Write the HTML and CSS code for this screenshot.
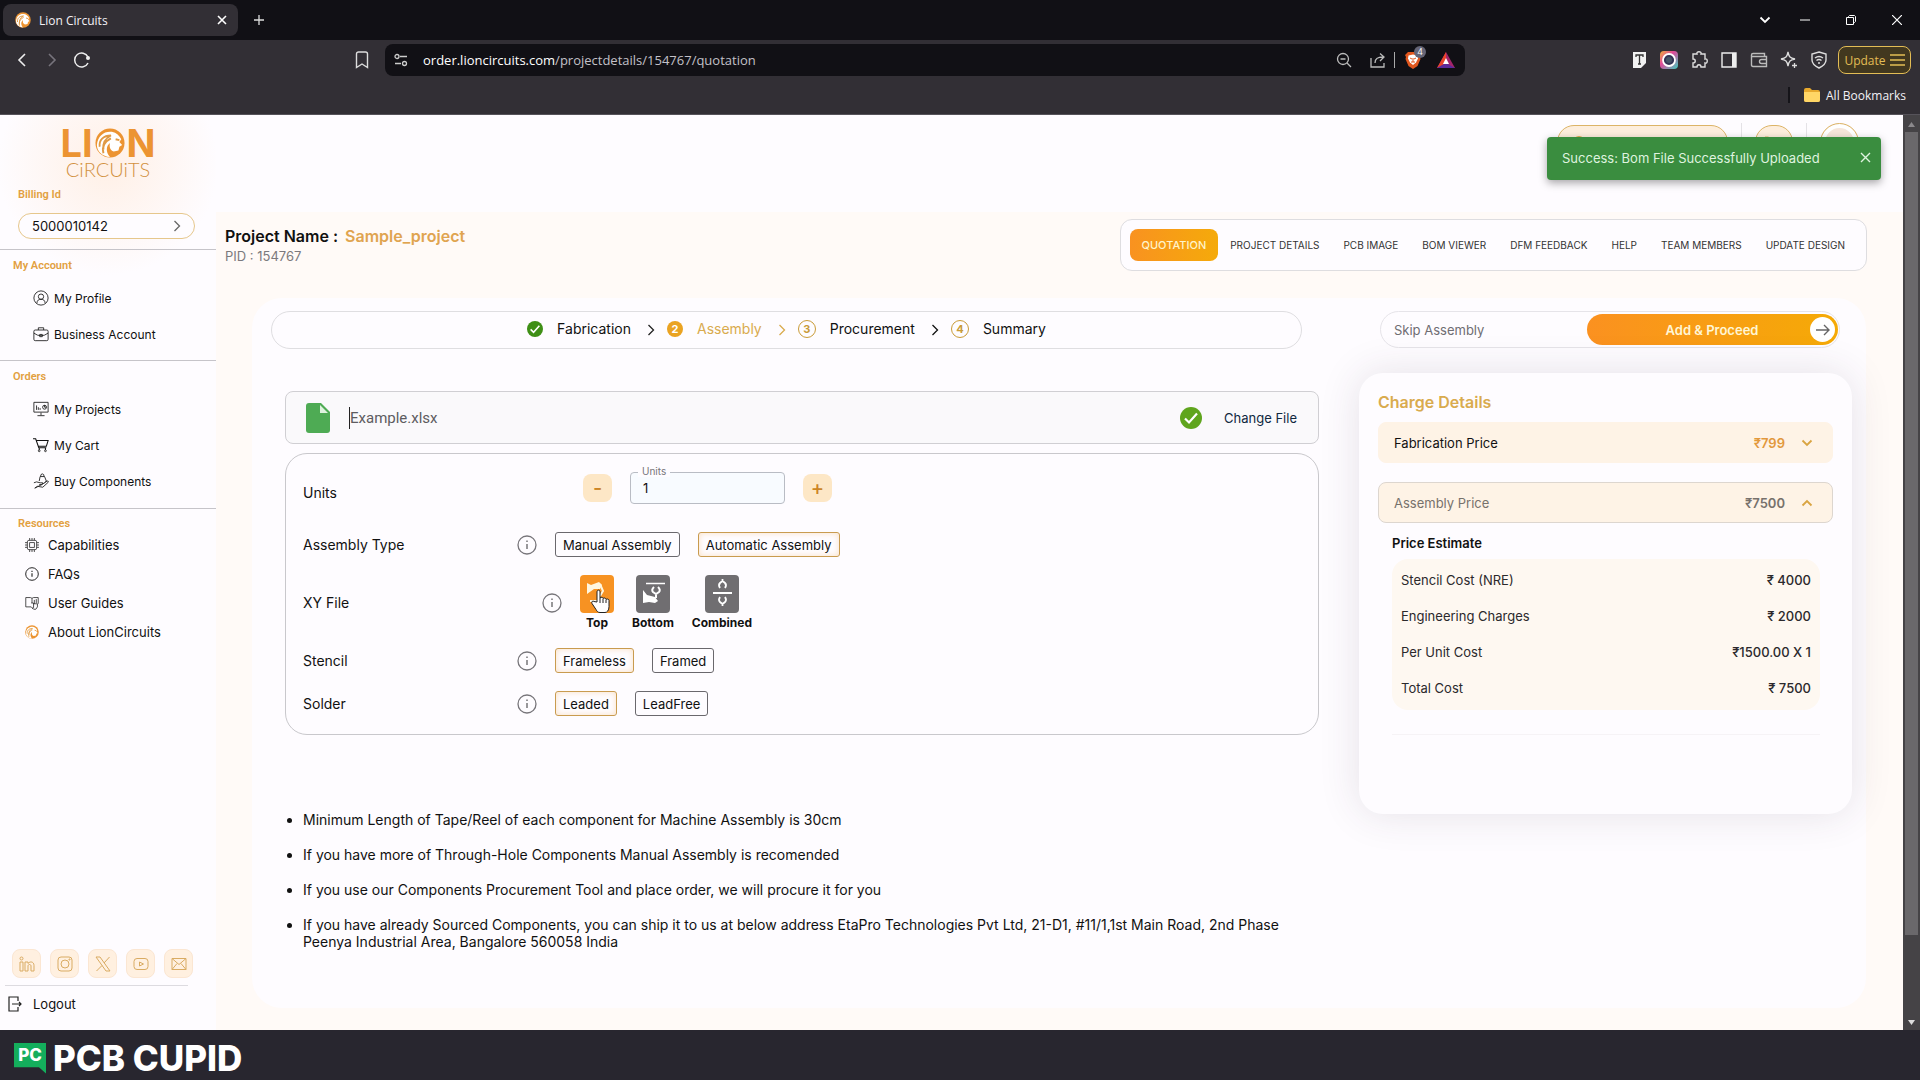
FILE: index.html
```html
<!DOCTYPE html>
<html lang="en">
<head>
    <meta charset="UTF-8">
    <meta name="viewport" content="width=device-width, initial-scale=1.0">
    <title>Lion Circuits</title>
    <link rel="stylesheet" href="styles.css">
</head>
<body>
    <!-- shared symbols -->
    <svg class="defs" aria-hidden="true">
        <symbol id="lion" viewBox="0 0 32 32">
            <circle cx="16" cy="16" r="15.500" fill="#ec9432"/>
            <path d="M2 18C3 8 10 3 18 4c5 1 8 4 10 8l-2 3 3 3-3 2-1 4-5 1c-4-1-5-5-4-9-4 3-5 9 0 15C8 30 2 25 2 18z" fill="#fff"/>
            <path d="M5 20c-1-7 4-12 12-12-6 3-9 8-8 15M9 27c-2-8 2-13 8-16M22 12l4 1" fill="none" stroke="#e09a45" stroke-width="2"/>
        </symbol>
        <symbol id="info" viewBox="0 0 20 20">
            <circle cx="10" cy="10" r="9" fill="none" stroke="currentColor" stroke-width="1.300"/>
            <path d="M10 9v5M10 5.500v1.500" stroke="currentColor" stroke-width="1.500"/>
        </symbol>
        <symbol id="chevron" viewBox="0 0 8 12">
            <path d="M1.500 1l5 5-5 5" fill="none" stroke="currentColor" stroke-width="1.300"/>
        </symbol>
        <symbol id="down" viewBox="0 0 12 8">
            <path d="M1.500 1.500l4.500 4.500 4.500-4.500" fill="none" stroke="currentColor" stroke-width="1.800"/>
        </symbol>
        <symbol id="check" viewBox="0 0 22 22">
            <circle cx="11" cy="11" r="11" fill="currentColor"/>
            <path d="M5 11.500l4 4 8-9" fill="none" stroke="#fff" stroke-width="2.200"/>
        </symbol>
        <symbol id="cart" viewBox="0 0 18 18">
            <path d="M0 2h3l3.500 10h8.500M3.500 4h13.500l-2 6.500H6M7 12.500v2M14 12.500v2" fill="none" stroke="currentColor" stroke-width="1.200"/>
            <circle cx="7" cy="15.500" r="1"/><circle cx="14" cy="15.500" r="1"/>
        </symbol>
    </svg>

    <header class="browser">
        <div class="titlebar">
            <div class="tab">
                <svg class="tab-icon" viewBox="0 0 32 32"><use href="#lion"/></svg>
                <span>Lion Circuits</span>
                <button class="plain tab-close" aria-label="Close tab"><svg width="10" height="10" viewBox="0 0 10 10"><path d="M1 1l8 8M9 1l-8 8" stroke="#fff" stroke-width="1.600"/></svg></button>
            </div>
            <button class="plain" aria-label="New tab"><svg width="12" height="12" viewBox="0 0 12 12"><path d="M6 1v10M1 6h10" stroke="#ddd" stroke-width="1.300"/></svg></button>
            <div class="window-buttons">
                <button class="plain tab-search" aria-label="Search tabs"><svg width="12" height="8" viewBox="0 0 12 8" color="#fff"><use href="#down"/></svg></button>
                <button class="plain" aria-label="Minimize"><svg width="10" height="10" viewBox="0 0 10 10"><path d="M0 5h10" stroke="#fff"/></svg></button>
                <button class="plain" aria-label="Restore"><svg width="10" height="10" viewBox="0 0 10 10"><path d="M.5 2.500h7v7h-7zM2.500 2.500v-1l1-1h5l1 1v5l-1 1H8" fill="none" stroke="#fff"/></svg></button>
                <button class="plain" aria-label="Close"><svg width="10" height="10" viewBox="0 0 10 10"><path d="M0 0l10 10M10 0L0 10" stroke="#fff" stroke-width="1.200"/></svg></button>
            </div>
        </div>

        <div class="toolbar">
            <button class="plain" aria-label="Back"><svg width="18" height="18" viewBox="0 0 18 18"><path d="M12 3L6 9l6 6" fill="none" stroke="#eee" stroke-width="1.600"/></svg></button>
            <button class="plain" aria-label="Forward"><svg width="18" height="18" viewBox="0 0 18 18"><path d="M6 3l6 6-6 6" fill="none" stroke="#77747c" stroke-width="1.600"/></svg></button>
            <button class="plain" aria-label="Reload"><svg width="18" height="18" viewBox="0 0 18 18"><path d="M15 12a7 7 0 1 1 0-6" fill="none" stroke="#eee" stroke-width="1.500"/><circle cx="15" cy="7" r="2" fill="#eee"/></svg></button>
            <button class="plain bookmark" aria-label="Bookmark"><svg width="14" height="18" viewBox="0 0 14 18"><path d="M1.500 3a2 2 0 0 1 2-2h7a2 2 0 0 1 2 2v13.500L7 13l-5.500 3.500z" fill="none" stroke="#ddd" stroke-width="1.400"/></svg></button>
            <div class="address">
                <svg width="14" height="14" viewBox="0 0 14 14" fill="none" stroke="#ccc" stroke-width="1.300"><circle cx="3" cy="3.500" r="2"/><path d="M6 3.500h7M1 10.500h6"/><circle cx="10.500" cy="10.500" r="2"/></svg>
                <span class="address-text"><b>order.lioncircuits.com</b>/projectdetails/154767/quotation</span>
                <svg class="zoom-out" width="16" height="16" viewBox="0 0 16 16" fill="none" stroke="#bbb" stroke-width="1.300"><circle cx="7" cy="7" r="5.500"/><path d="M4.500 7h5M11 11l4 4"/></svg>
                <svg width="16" height="16" viewBox="0 0 16 16" fill="none" stroke="#bbb" stroke-width="1.300"><path d="M1 6v9h13v-4M5 11c0-5 3-6 8-6M10 1.500L14 5l-4 4"/></svg>
                <i class="bar"></i>
                <span class="shield">
                    <svg width="16" height="18" viewBox="0 0 16 18"><path d="M3 1h10l3 3-1 2 .5 2-3 7L8 18l-4.500-3-3-7L1 6 0 4z" fill="#e2571e"/><path d="M3.500 4.500L8 3.500l4.500 1 .500 3-2 4-3 2.500-3-2.500-2-4z" fill="#fff"/><path d="M5 7l2 1M11 7l-2 1M8 7v4M6 11h4" stroke="#e2571e"/></svg>
                    <em>4</em>
                </span>
                <svg width="18" height="16" viewBox="0 0 18 16"><path d="M9 0l9 16H0z" fill="#a3246a"/><path d="M9 0L0 16l9-5z" fill="#e8442a"/><path d="M0 16h18l-9-5z" fill="#5b2b9a"/><path d="M9 6l3 6H6z" fill="#fff"/></svg>
            </div>
            <svg width="18" height="18" viewBox="0 0 18 18"><path d="M3 1h13v11l-5 5H3z" fill="#f2f2f2"/><path d="M6 6V4h7v2M9.500 4v9M8 13h3" fill="none" stroke="#333" stroke-width="1.300"/></svg>
            <svg width="18" height="18" viewBox="0 0 18 18"><defs><linearGradient id="lens" x2="1" y2="1"><stop stop-color="#f0b13a"/><stop offset=".4" stop-color="#e0489a"/><stop offset="1" stop-color="#3ccfc0"/></linearGradient></defs><rect width="18" height="18" rx="4" fill="url(#lens)"/><circle cx="9" cy="9" r="6" fill="#335" stroke="#fff" stroke-width="1.800"/><circle cx="9" cy="9" r="3" fill="#456"/></svg>
            <svg width="18" height="18" viewBox="0 0 18 18"><path d="M3 3h4c-1-3 5-3 4 0h4v5c3-1 3 5 0 4v4h-4c0-3-4-3-4 0H3v-4c3 0 3-4 0-4z" fill="none" stroke="#ddd" stroke-width="1.400"/></svg>
            <svg width="18" height="18" viewBox="0 0 18 18"><path d="M2 2h14v14H2z" fill="none" stroke="#eee" stroke-width="1.400"/><path d="M12 2h4v14h-4z" fill="#eee"/></svg>
            <svg width="18" height="18" viewBox="0 0 18 18"><path d="M3 2.500h11.500v3h2v10H3q-1.500 0-1.500-1.500V4q0-1.500 1.500-1.500zM1.500 5.500h13M16.500 8.500h-5q-2 0-2 2t2 2h5" fill="none" stroke="#bbb" stroke-width="1.400"/></svg>
            <svg width="18" height="18" viewBox="0 0 18 18"><path d="M8 1c1 5 2 6 7 7-5 1-6 2-7 7-1-5-2-6-7-7 5-1 6-2 7-7zM14.500 12v5M12 14.500h5" fill="none" stroke="#ddd" stroke-width="1.300"/></svg>
            <svg width="18" height="18" viewBox="0 0 18 18"><path d="M9 1l7 2v6c0 4-3 6-7 8-4-2-7-4-7-8V3zM5 7q4-3 8 0M6.500 9.500q2.500-2 5 0" fill="none" stroke="#ddd" stroke-width="1.400"/><circle cx="9" cy="12" r="1" fill="#ddd"/></svg>
            <button class="update">Update
                <svg width="15" height="12" viewBox="0 0 15 12"><path d="M0 1h15M0 6h15M0 11h15" stroke="#e3bd55" stroke-width="1.300"/></svg>
            </button>
        </div>

        <div class="bookmarks">
            <i class="bar"></i>
            <svg width="16" height="14" viewBox="0 0 16 14"><path d="M0 2q0-2 2-2h4l2 2h6q2 0 2 2v8q0 2-2 2H2q-2 0-2-2z" fill="#e7a92d"/><path d="M0 4h16v8q0 2-2 2H2q-2 0-2-2z" fill="#ffd666"/></svg>
            <span>All Bookmarks</span>
        </div>
    </header>

    <div class="page">
        <aside class="sidebar">
            <div class="logo">
                <div class="logo-top">LI<svg width="30" height="30" viewBox="0 0 32 32"><use href="#lion"/></svg>N</div>
                <div class="logo-bottom">CiRCUiTS</div>
            </div>
            <div class="side-title billing-title">Billing Id</div>
            <button class="billing">5000010142
                <svg width="8" height="12" viewBox="0 0 8 12"><use href="#chevron"/></svg>
            </button>

            <nav class="side-section">
                <div class="side-title">My Account</div>
                <a href="#"><svg viewBox="0 0 18 18"><circle cx="9" cy="9" r="8"/><circle cx="9" cy="7.500" r="3"/><path d="M4.500 14.500c0-3 2-4 4.500-4s4.500 1 4.500 4"/></svg>My Profile</a>
                <a href="#"><svg viewBox="0 0 18 18"><path d="M2.500 4.500h13q1.500 0 1.500 1.500v9q0 1.500-1.500 1.500h-13Q1 16.500 1 15V6q0-1.500 1.500-1.500zM6 4.500V2h6v2.500M1 8q4 3 8 3t8-3M7.500 9.500h3v2.500h-3z"/></svg>Business Account</a>
            </nav>
            <nav class="side-section orders">
                <div class="side-title">Orders</div>
                <a href="#"><svg viewBox="0 0 18 18"><path d="M1 1.500h16v11H1zM9 13v3M5 16.500h8M4 5v5M6 7v3M8 8v2"/><circle cx="13" cy="7" r="2.200"/><path d="M13 7V4.500M13 7h2"/></svg>My Projects</a>
                <a href="#"><svg viewBox="0 0 18 18"><use href="#cart"/></svg>My Cart</a>
                <a href="#"><svg viewBox="0 0 18 18"><path d="M1 11l3-1 4 1h3l-1 2H7M10 13l6-4q2 0 1 1.500L11 16l-6-1-3 2zM7 9l1-5h5l2 5-2 2M8.500 4q0-3 2-3t2 3"/></svg>Buy Components</a>
            </nav>
            <nav class="side-section resources">
                <div class="side-title">Resources</div>
                <a href="#"><svg viewBox="0 0 18 18"><rect x="3" y="3" width="12" height="12" rx="2"/><rect x="6" y="6" width="6" height="6"/><path d="M6 0v3M9 0v3M12 0v3M6 15v3M9 15v3M12 15v3M0 6h3M0 9h3M0 12h3M15 6h3M15 9h3M15 12h3"/></svg>Capabilities</a>
                <a href="#"><svg viewBox="0 0 20 20"><use href="#info"/></svg>FAQs</a>
                <a href="#"><svg viewBox="0 0 18 18"><path d="M1 2h6l2 1 2-1h6v8M1 2v12h7M9 3v6M12 5v5M14.500 4v5M8 9h3v6l-2 1M11 10h5v4l-2 3h-3l-3-3"/></svg>User Guides</a>
                <a href="#"><svg class="filled" viewBox="0 0 32 32"><use href="#lion"/></svg>About LionCircuits</a>
            </nav>

            <div class="side-bottom">
                <div class="socials">
                    <a href="#" aria-label="LinkedIn"><svg viewBox="0 0 16 16"><circle cx="2.500" cy="2.500" r="1.500"/><path d="M1 6h3v9H1zM6 6h3v1.500c2-2.500 6-2 6 2V15h-3v-5c0-2-3-2-3 0v5H6z"/></svg></a>
                    <a href="#" aria-label="Instagram"><svg viewBox="0 0 16 16"><rect x="1" y="1" width="14" height="14" rx="3"/><circle cx="8" cy="8" r="4"/><circle cx="12.500" cy="3.500" r=".6"/></svg></a>
                    <a href="#" aria-label="X"><svg viewBox="0 0 16 16"><path d="M1 1h4l10 14h-4zM14.500 1L9 7M7 9.500L1.500 15"/></svg></a>
                    <a href="#" aria-label="YouTube"><svg viewBox="0 0 16 16"><rect x="1" y="2.500" width="14" height="11" rx="3"/><path d="M6.500 6v4l4-2z"/></svg></a>
                    <a href="#" aria-label="Email"><svg viewBox="0 0 16 16"><path d="M1 2.500h14v11H1zM1 2.500l7 6 7-6M1 13.500l5-6M15 13.500l-5-6"/></svg></a>
                </div>
                <a href="#" class="logout"><svg width="14" height="16" viewBox="0 0 14 16"><path d="M10 5V1H1v14h9v-4M4 8h9M11 6l2 2-2 2" fill="none" stroke="#222" stroke-width="1.200"/></svg>Logout</a>
            </div>
        </aside>

        <main class="main">
            <div class="topbar">
                <div class="top-pill"><svg width="14" height="14" viewBox="0 0 14 14"><circle cx="7" cy="7" r="6" fill="#e0a94a"/></svg></div>
                <i class="bar"></i>
                <div class="top-cart"><svg width="18" height="18" viewBox="0 0 18 18"><use href="#cart"/></svg></div>
                <i class="bar"></i>
                <div class="top-avatar"></div>
            </div>

            <div class="project">
                <div>
                    <h1>Project Name : <span>Sample_project</span></h1>
                    <p>PID : 154767</p>
                </div>
                <nav class="tabs">
                    <a href="#" class="active">QUOTATION</a>
                    <a href="#">PROJECT DETAILS</a>
                    <a href="#">PCB IMAGE</a>
                    <a href="#">BOM VIEWER</a>
                    <a href="#">DFM FEEDBACK</a>
                    <a href="#">HELP</a>
                    <a href="#">TEAM MEMBERS</a>
                    <a href="#">UPDATE DESIGN</a>
                </nav>
            </div>

            <section class="panel">
                <div class="panel-head">
                    <ol class="steps">
                        <li><svg class="done" width="16" height="16" viewBox="0 0 22 22"><use href="#check"/></svg>Fabrication</li>
                        <li class="current"><svg class="arrow" viewBox="0 0 8 12"><use href="#chevron"/></svg><b class="full">2</b>Assembly</li>
                        <li><svg class="arrow gold" viewBox="0 0 8 12"><use href="#chevron"/></svg><b>3</b>Procurement</li>
                        <li><svg class="arrow" viewBox="0 0 8 12"><use href="#chevron"/></svg><b>4</b>Summary</li>
                    </ol>
                    <div class="proceed">
                        <button class="skip">Skip Assembly</button>
                        <button class="next"><span>Add &amp; Proceed</span>
                            <i><svg width="14" height="12" viewBox="0 0 14 12"><path d="M0 6h13M8 1l5 5-5 5" fill="none" stroke="#666" stroke-width="1.400"/></svg></i>
                        </button>
                    </div>
                </div>

                <div class="panel-body">
                    <div class="left">
                        <div class="file">
                            <svg width="24" height="30" viewBox="0 0 24 30"><path d="M3 0h12l9 9v18q0 3-3 3H3q-3 0-3-3V3q0-3 3-3z" fill="#4eab54"/><path d="M14 2v8h8z" fill="#dff3df"/></svg>
                            <span class="file-name">Example.xlsx</span>
                            <svg class="ok" width="22" height="22" viewBox="0 0 22 22"><use href="#check"/></svg>
                            <button class="plain change">Change File</button>
                        </div>

                        <form class="options">
                            <div class="row units">
                                <label for="units" class="name">Units</label>
                                <button type="button" class="step">-</button>
                                <div class="field">
                                    <input id="units" type="text" value="1">
                                    <span>Units</span>
                                </div>
                                <button type="button" class="step">+</button>
                            </div>
                            <div class="row">
                                <span class="name">Assembly Type</span>
                                <svg class="info" viewBox="0 0 20 20"><use href="#info"/></svg>
                                <button type="button" class="choice">Manual Assembly</button>
                                <button type="button" class="choice selected">Automatic Assembly</button>
                            </div>
                            <div class="row xy">
                                <span class="name">XY File</span>
                                <svg class="info" viewBox="0 0 20 20"><use href="#info"/></svg>
                                <button type="button" class="side selected">
                                    <i><svg width="34" height="38" viewBox="0 0 34 38"><path d="M7 8l4 2 8-3 3 3-2 4-6 0-7 5z" fill="#fff6df"/><path d="M20 9l3 7-3 5M10 26h9" fill="none" stroke="#fff6df" stroke-width="2"/></svg></i>
                                    Top
                                    <svg class="pointer" width="20" height="25" viewBox="0 0 20 25"><path d="M6 13V3c0-2.500 3-2.500 3 0v6c1-1 3-1 3 .5 1-1 3-.5 3 1 1-1 3-.5 3 1v6c0 4-2 6-4 6H9c-2 0-3-1-4-3l-4-6c-1-2 1-3 2-2z" fill="#fff" stroke="#222"/><path d="M9 9v5M12 10v4M15 11v3" stroke="#222"/></svg>
                                </button>
                                <button type="button" class="side">
                                    <i><svg width="34" height="38" viewBox="0 0 34 38" fill="none" stroke="#fff"><path d="M10 8.500h19" stroke-width="1.500"/><path d="M18 12q-3 3-1 5l3 2 3-2q2-2-1-5M20 19v4" stroke-width="2"/><path d="M7 15l4 5 8 2 3 4-3 2-6-1-6 1z" fill="#fff" stroke="none"/></svg></i>
                                    Bottom
                                </button>
                                <button type="button" class="side">
                                    <i><svg width="34" height="38" viewBox="0 0 34 38" fill="none" stroke="#fff" stroke-width="1.800"><path d="M8 18h19M15 13q-2-3 0-5l2.500-2L20 8q2 2 0 5M17.500 4v3M15 22q-2 3 0 5l2.500 2 2.500-2q2-2 0-5M17.500 28v3"/></svg></i>
                                    Combined
                                </button>
                            </div>
                            <div class="row">
                                <span class="name">Stencil</span>
                                <svg class="info" viewBox="0 0 20 20"><use href="#info"/></svg>
                                <button type="button" class="choice selected">Frameless</button>
                                <button type="button" class="choice">Framed</button>
                            </div>
                            <div class="row">
                                <span class="name">Solder</span>
                                <svg class="info" viewBox="0 0 20 20"><use href="#info"/></svg>
                                <button type="button" class="choice selected">Leaded</button>
                                <button type="button" class="choice">LeadFree</button>
                            </div>
                        </form>

                        <ul class="notes">
                            <li>Minimum Length of Tape/Reel of each component for Machine Assembly is 30cm</li>
                            <li>If you have more of Through-Hole Components Manual Assembly is recomended</li>
                            <li>If you use our Components Procurement Tool and place order, we will procure it for you</li>
                            <li>If you have already Sourced Components, you can ship it to us at below address EtaPro Technologies Pvt Ltd, 21-D1, #11/1,1st Main Road, 2nd Phase Peenya Industrial Area, Bangalore 560058 India</li>
                        </ul>
                    </div>

                    <div class="charges">
                        <h2>Charge Details</h2>
                        <button class="price">Fabrication Price <b>₹799</b>
                            <svg width="12" height="8" viewBox="0 0 12 8"><use href="#down"/></svg>
                        </button>
                        <button class="price open">Assembly Price <b>₹7500</b>
                            <svg width="12" height="8" viewBox="0 0 12 8"><use href="#down"/></svg>
                        </button>
                        <div class="estimate">
                            <h3>Price Estimate</h3>
                            <div class="estimate-box">
                                <table>
                                    <tr><th>Stencil Cost (NRE)</th><td>₹ 4000</td></tr>
                                    <tr><th>Engineering Charges</th><td>₹ 2000</td></tr>
                                    <tr><th>Per Unit Cost</th><td>₹1500.00 X 1</td></tr>
                                    <tr><th>Total Cost</th><td>₹ 7500</td></tr>
                                </table>
                            </div>
                        </div>
                    </div>
                </div>
            </section>
        </main>

        <div class="scrollbar">
            <svg width="7" height="5" viewBox="0 0 7 5"><path d="M0 5h7L3.500 0z" fill="#8b898c"/></svg>
            <div class="thumb"></div>
            <svg width="7" height="5" viewBox="0 0 7 5"><path d="M0 0h7L3.500 5z" fill="#ddd"/></svg>
        </div>

        <div class="toast" role="alert">
            Success: Bom File Successfully Uploaded
            <button class="plain" aria-label="Dismiss"><svg width="11" height="11" viewBox="0 0 11 11"><path d="M1 1l9 9M10 1l-9 9" stroke="#dff3df" stroke-width="1.400"/></svg></button>
        </div>
    </div>

    <footer class="brand">
        <span class="brand-mark">PC</span>
        <span class="brand-name">PCB CUPID</span>
    </footer>
</body>
</html>
```
FILE: styles.css
```css
* {
    margin: 0;
    padding: 0;
    box-sizing: border-box;
}

body {
    font-family: Inter, 'Liberation Sans', sans-serif;
    font-size: 14px;
    color: #111;
    background: #fefcff;
    min-height: 100vh;
    display: flex;
    flex-direction: column;
}

button, input {
    font: inherit;
    color: inherit;
}

button {
    cursor: pointer;
}

a {
    color: inherit;
    text-decoration: none;
}

svg {
    flex: none;
    display: block;
}

.defs {
    position: absolute;
    width: 0;
    height: 0;
}

.plain {
    border: none;
    background: none;
}

/* Browser window */
.browser {
    font-family: 'Open Sans', 'Noto Sans', sans-serif;
    background: #322f35;
    color: #f3f1f5;
    border-bottom: 1px solid #56535a;
}

.titlebar {
    background: #111015;
    height: 40px;
    display: flex;
    align-items: center;
    gap: 15px;
    padding-left: 3px;
}

.tab {
    width: 235px;
    height: 32px;
    border-radius: 8px;
    background: #322f35;
    display: flex;
    align-items: center;
    gap: 8px;
    padding: 0 11px 0 12px;
    font-size: 12px;
}

.tab-icon {
    width: 16px;
    height: 16px;
}

.tab-close {
    margin-left: auto;
}

.window-buttons {
    margin-left: auto;
    display: flex;
    align-items: center;
    gap: 36px;
    padding-right: 18px;
}

.tab-search {
    margin-right: -7px;
}

.toolbar {
    height: 40px;
    display: flex;
    align-items: center;
    gap: 12px;
    padding: 0 9px 0 13px;
}

.bookmark {
    margin-left: 252px;
}

.address {
    flex: 1;
    height: 32px;
    margin: 0 153px 0 4px;
    border-radius: 8px;
    background: #111015;
    display: flex;
    align-items: center;
    gap: 12px;
    padding: 0 10px 0 9px;
}

.address-text {
    flex: 1;
    font-size: 13px;
    color: #c3c0c8;
    padding-left: 3px;
}

.address-text b {
    font-weight: 400;
    color: #fff;
}

.zoom-out {
    margin-right: 6px;
}

.address .bar {
    width: 1px;
    height: 16px;
    background: #aaa;
    margin: 0 -2px 0 -4px;
}

.shield {
    position: relative;
    margin-right: 4px;
}

.shield em {
    position: absolute;
    top: -5px;
    left: 9px;
    width: 12px;
    height: 12px;
    border-radius: 6px;
    background: #666576;
    color: #fff;
    font-size: 9px;
    font-style: normal;
    line-height: 12px;
    text-align: center;
}

.update {
    width: 73px;
    height: 28px;
    margin-left: -2px;
    border: 1px solid #e3bd55;
    border-radius: 8px;
    background: #42381f;
    color: #e3bd55;
    font-size: 12px;
    display: flex;
    align-items: center;
    justify-content: center;
    gap: 4px;
}

.bookmarks {
    height: 34px;
    padding: 0 14px 4px;
    display: flex;
    align-items: center;
    justify-content: flex-end;
    gap: 6px;
    font-size: 12px;
}

.bookmarks .bar {
    width: 2px;
    height: 16px;
    background: #151419;
    margin-right: 8px;
}

/* Page */
.page {
    position: relative;
    flex: 1;
    display: flex;
}

.sidebar {
    width: 216px;
    flex: none;
    display: flex;
    flex-direction: column;
    background: radial-gradient(circle at 108px 50px, #fff0e6 0, #fefcff 110px);
    font-size: 13px;
}

.logo {
    height: 72px;
    padding-top: 12px;
    display: flex;
    flex-direction: column;
    align-items: center;
}

.logo-top {
    display: flex;
    align-items: center;
    gap: 2px;
    height: 32px;
    font-size: 38px;
    font-weight: 700;
    line-height: 32px;
    color: #ec9432;
}

.logo-bottom {
    font-family: Lato, sans-serif;
    font-weight: 300;
    font-size: 20px;
    line-height: 20px;
    color: #d2913f;
}

.side-title {
    font-family: Roboto, sans-serif;
    font-size: 11px;
    font-weight: 600;
    line-height: 16px;
    color: #e2a040;
    padding-left: 13px;
}

.billing-title {
    padding-left: 18px;
}

.billing {
    margin: 10px 21px 10px 18px;
    height: 26px;
    border: 1px solid #e6c78c;
    border-radius: 13px;
    background: #fefcff;
    display: flex;
    align-items: center;
    justify-content: space-between;
    padding: 0 13px;
}

.billing svg {
    color: #666;
}

.side-section {
    border-top: 1px solid #c6c4c9;
    padding: 8px 0;
}

.side-section a {
    height: 36px;
    display: flex;
    align-items: center;
    gap: 5px;
    padding-left: 33px;
    font-size: 12px;
}

.side-section a:first-of-type {
    margin-top: 6px;
}

.side-section a svg {
    width: 16px;
    height: 16px;
    fill: none;
    stroke: #222;
    stroke-width: 1;
}

.side-section a svg.filled {
    stroke: none;
}

.orders {
    padding-bottom: 9px;
}

.resources .side-title {
    line-height: 14px;
    padding-left: 18px;
}

.resources a {
    height: 29px;
    gap: 9px;
    padding-left: 25px;
    font-size: 13px;
}

.resources a:first-of-type {
    margin-top: -1px;
}

.resources a svg {
    width: 14px;
    height: 14px;
}

.side-bottom {
    margin-top: auto;
    padding-bottom: 9px;
}

.socials {
    display: flex;
    gap: 9px;
    padding: 0 0 7px 12px;
}

.socials a {
    width: 29px;
    height: 29px;
    border: 1px solid #fbe6d2;
    border-radius: 8px;
    background: #fff0e0;
    display: flex;
    align-items: center;
    justify-content: center;
}

.socials svg {
    width: 16px;
    height: 16px;
    fill: none;
    stroke: #d9ab62;
    stroke-width: 1;
}

.logout {
    border-top: 1px solid #dddbe0;
    margin: 0 28px 0 5px;
    padding-left: 3px;
    height: 36px;
    display: flex;
    align-items: center;
    gap: 11px;
}

.main {
    flex: 1;
    min-width: 0;
    display: flex;
    flex-direction: column;
    background: #fffaf7;
}

.topbar {
    height: 97px;
    background: #fefcff;
    display: flex;
    justify-content: flex-end;
    gap: 13px;
    padding: 8px 44px 0 0;
}

.topbar .bar {
    width: 1px;
    height: 40px;
    background: #e4e2e6;
}

.top-pill, .top-cart {
    height: 34px;
    margin-top: 2px;
    border: 1px solid #dcb467;
    border-radius: 17px;
    background: #fdeedd;
    color: #dcb467;
    padding: 9px;
}

.top-pill {
    width: 171px;
    padding-left: 14px;
}

.top-cart {
    width: 38px;
}

.top-avatar {
    width: 39px;
    height: 39px;
    border: 1px solid #dcb467;
    border-radius: 50%;
    background: #f6e6da;
    box-shadow: inset 0 0 0 4px #fff;
}

.project {
    display: flex;
    justify-content: space-between;
    align-items: flex-start;
    padding: 7px 36px 0 9px;
}

.project h1 {
    font-size: 16px;
    font-weight: 600;
    line-height: 20px;
    margin-top: 7px;
}

.project h1 span {
    color: #e0a450;
    margin-left: 3px;
}

.project p {
    font-size: 13px;
    line-height: 20px;
    color: #7b797d;
}

.tabs {
    height: 52px;
    border: 1px solid #dedde0;
    border-radius: 12px;
    background: #fefcff;
    display: flex;
    align-items: center;
    padding: 0 9px;
    font-size: 10px;
    color: #333;
}

.tabs a {
    padding: 0 12px;
    line-height: 32px;
}

.tabs .active {
    border-radius: 8px;
    background: linear-gradient(90deg, #f99220, #f5aa0a);
    color: #fff3c9;
    font-weight: 500;
    font-size: 11px;
}

.panel {
    flex: 1;
    margin: 27px 37px 22px 36px;
    padding-top: 13px;
    border-radius: 30px;
    background: #fefcff;
}

.panel-head {
    display: flex;
    gap: 78px;
    padding: 0 26px 0 19px;
}

.steps {
    flex: 1;
    height: 38px;
    border: 1px solid #dfdee1;
    border-radius: 19px;
    list-style: none;
    display: flex;
    align-items: center;
    justify-content: center;
    padding-bottom: 3px;
}

.steps li {
    display: flex;
    align-items: center;
}

.steps .done {
    color: #3f8f16;
    margin-right: 14px;
}

.steps .arrow {
    width: 8px;
    height: 12px;
    margin: 3px 12px 0 16px;
}

.steps .gold {
    color: #d9ab4e;
}

.steps b {
    width: 18px;
    height: 18px;
    border: 1px solid #c99b37;
    border-radius: 50%;
    color: #c99b37;
    font-size: 11px;
    line-height: 16px;
    text-align: center;
    margin-right: 14px;
}

.steps .full {
    width: 16px;
    height: 16px;
    border: none;
    background: #eaa322;
    color: #fff;
}

.steps .current {
    color: #d9ab4e;
}

.steps .current .arrow {
    color: #222;
}

.proceed {
    width: 460px;
    height: 37px;
    border: 1px solid #e6e4e9;
    border-radius: 19px;
    display: flex;
    padding: 2px 1px;
    font-size: 13px;
}

.skip {
    flex: 1;
    border: none;
    background: none;
    color: #6f6d72;
    text-align: left;
    padding-left: 12px;
}

.next {
    width: 251px;
    border: none;
    border-radius: 16px;
    background: linear-gradient(90deg, #fb9120, #f5aa06);
    color: #fff6d5;
    font-weight: 600;
    display: flex;
    align-items: center;
    padding-right: 3px;
}

.next span {
    flex: 1;
    padding-left: 27px;
}

.next i {
    width: 25px;
    height: 25px;
    border-radius: 50%;
    background: #fff;
    display: flex;
    align-items: center;
    justify-content: center;
}

.panel-body {
    display: grid;
    grid-template-columns: minmax(0, 1fr) 493px;
    gap: 40px;
    align-items: start;
    padding: 24px 14px 24px 33px;
}

.left {
    padding-top: 18px;
}

.file {
    height: 53px;
    border: 1px solid #d0cfd3;
    border-radius: 8px;
    background: #faf9fb;
    display: flex;
    align-items: center;
    padding: 0 21px 0 20px;
}

.file-name {
    flex: 1;
    margin-left: 19px;
    font-family: Roboto, sans-serif;
    font-size: 15px;
    color: #5d5c60;
}

.file-name::before {
    content: '';
    border-left: 1px solid #222;
    padding: 2px 0;
}

.file .ok {
    color: #5fa51d;
}

.change {
    margin-left: 22px;
    font-size: 13px;
    color: #10283f;
}

.options {
    margin-top: 9px;
    border: 1px solid #c9c8cc;
    border-radius: 22px;
    padding: 18px 17px;
    display: flex;
    flex-direction: column;
    gap: 18px;
}

.row {
    display: flex;
    align-items: center;
    gap: 18px;
}

.name {
    width: 196px;
}

.info {
    width: 20px;
    height: 20px;
    color: #77757a;
}

.units {
    margin-bottom: 10px;
}

.units .name {
    width: 262px;
    padding-top: 8px;
}

.step {
    width: 29px;
    height: 28px;
    border: none;
    border-radius: 8px;
    background: #fde7c6;
    color: #cc8526;
    font-size: 20px;
    font-weight: 500;
    line-height: 24px;
}

.field {
    position: relative;
    width: 155px;
}

.field input {
    width: 100%;
    height: 32px;
    border: 1px solid #b9bcc4;
    border-radius: 4px;
    background: #f8fbff;
    padding: 0 12px;
    font-size: 13px;
    display: block;
}

.field span {
    position: absolute;
    top: -7px;
    left: 8px;
    padding: 0 4px;
    background: #fefcff;
    font-size: 10px;
    line-height: 12px;
    color: #77757a;
}

.choice {
    height: 25px;
    border: 1px solid #6a686d;
    border-radius: 3px;
    background: #fefcff;
    padding: 0 7px;
    font-size: 13px;
}

.choice.selected {
    border-color: #c99b4f;
    box-shadow: inset 0 0 6px #fbe0c4;
}

.xy .name {
    width: 221px;
}

.side {
    position: relative;
    border: none;
    background: none;
    font-size: 12px;
    font-weight: 700;
    line-height: 14px;
    display: flex;
    flex-direction: column;
    align-items: center;
    gap: 3px;
}

.side i {
    width: 34px;
    height: 38px;
    border-radius: 4px;
    background: #706e71;
}

.side.selected i {
    background: #f79222;
}

.pointer {
    position: absolute;
    top: 14px;
    left: 11px;
}

.notes {
    margin-top: 76px;
    padding-left: 18px;
    line-height: 17px;
}

.notes li + li {
    margin-top: 18px;
}

.charges {
    min-height: 441px;
    border-radius: 24px;
    background: #fefcff;
    box-shadow: 0 0 40px rgba(60, 50, 70, 0.13);
    padding: 19px;
    font-size: 13px;
}

.charges h2 {
    font-size: 16px;
    font-weight: 600;
    line-height: 20px;
    color: #d9ab4e;
    margin-bottom: 10px;
}

.price {
    width: 100%;
    height: 41px;
    border: 1px solid #fef3e6;
    border-radius: 8px;
    background: #fef3e6;
    display: flex;
    align-items: center;
    padding: 0 19px 0 15px;
}

.price b {
    margin-left: auto;
    margin-right: 16px;
    font-weight: 600;
    color: #e2983c;
}

.price svg {
    color: #d9a441;
}

.price.open {
    margin-top: 19px;
    border-color: #ddd6cf;
    color: #77716c;
}

.price.open b {
    color: #77716c;
}

.price.open svg {
    transform: rotate(180deg);
}

.estimate {
    margin: 0 13px 0 14px;
    padding-bottom: 24px;
    border-bottom: 1px solid #f6f3f6;
}

.estimate h3 {
    font-size: 13px;
    font-weight: 600;
    line-height: 16px;
    padding: 12px 0 8px;
}

.estimate-box {
    border-radius: 16px;
    background: #fef8f1;
    padding: 3px 9px 4px;
}

.estimate table {
    width: 100%;
    border-collapse: collapse;
    color: #2b292c;
}

.estimate th {
    height: 36px;
    font-weight: 400;
    text-align: left;
}

.estimate td {
    font-weight: 500;
    text-align: right;
}

.toast {
    position: absolute;
    top: 22px;
    right: 39px;
    width: 334px;
    height: 43px;
    border-radius: 4px;
    background: #3a8d3f;
    color: #dff3df;
    font-size: 13px;
    display: flex;
    align-items: center;
    justify-content: space-between;
    padding: 0 10px 2px 15px;
    box-shadow: 0 3px 8px rgba(0, 0, 0, 0.35);
}

.scrollbar {
    width: 17px;
    background: #454346;
    display: flex;
    flex-direction: column;
    align-items: center;
    padding: 7px 0 5px;
    gap: 5px;
}

.thumb {
    width: 13px;
    flex: 1;
    margin-bottom: 80px;
    background: #6a686b;
}

/* Bottom strip */
.brand {
    height: 50px;
    background: #28262f;
    color: #fff;
    display: flex;
    align-items: center;
    gap: 7px;
    padding: 6px 0 0 14px;
}

.brand-mark {
    width: 32px;
    height: 31px;
    background: #14ae5c;
    clip-path: polygon(0 0, 100% 0, 100% 100%, 78% 80%, 0 80%);
    font-size: 17px;
    font-weight: 800;
    line-height: 25px;
    text-align: center;
}

.brand-name {
    font-size: 35px;
    font-weight: 800;
    line-height: 36px;
}
```
